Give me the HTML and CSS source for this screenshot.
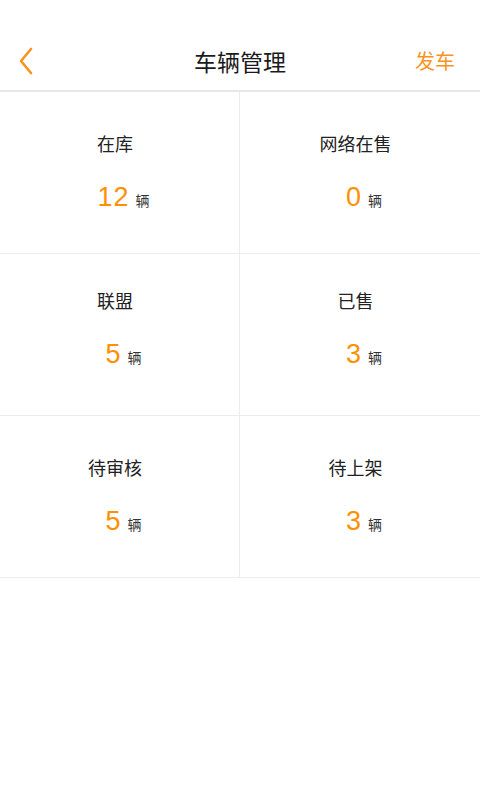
FILE: index.html
```html
<!DOCTYPE html>
<html lang="zh">
<head>
<meta charset="utf-8">
<link rel="stylesheet" href="styles.css">
</head>
<body>
<div class="app">
  <header class="nav">
    <div class="back">
      <svg width="16" height="28" viewBox="0 0 16 28"><path d="M13 2 L3 14 L13 26" fill="none" stroke="#f7931e" stroke-width="2.6" stroke-linecap="round" stroke-linejoin="round"/></svg>
    </div>
    <div class="title">车辆管理</div>
    <div class="action">发车</div>
  </header>
  <div class="grid">
    <div class="cell"><div class="label">在库</div><div class="count"><span class="num">12</span><span class="unit">辆</span></div></div>
    <div class="cell"><div class="label">网络在售</div><div class="count"><span class="num">0</span><span class="unit">辆</span></div></div>
    <div class="cell cell-mid"><div class="label">联盟</div><div class="count"><span class="num">5</span><span class="unit">辆</span></div></div>
    <div class="cell cell-mid"><div class="label">已售</div><div class="count"><span class="num">3</span><span class="unit">辆</span></div></div>
    <div class="cell"><div class="label">待审核</div><div class="count"><span class="num">5</span><span class="unit">辆</span></div></div>
    <div class="cell"><div class="label">待上架</div><div class="count"><span class="num">3</span><span class="unit">辆</span></div></div>
  </div>
</div>
</body>
</html>
```
FILE: styles.css
```css
* { box-sizing: border-box; margin: 0; padding: 0; }
html, body { background: #fff; }
body { font-family: "Noto Sans CJK SC", "Noto Sans", sans-serif; color: #222; }
.app { width: 480px; height: 800px; background: #fff; }
.nav {
  height: 92px;
  padding-top: 31px;
  display: grid;
  grid-template-columns: 80px 1fr 80px;
  align-items: center;
  border-bottom: 2px solid #e6e6e6;
}
.nav > * { height: 59px; display: flex; align-items: center; }
.back { padding-left: 18px; }
.back svg { display: block; }
.title { justify-content: center; font-size: 23px; color: #1a1a1a; }
.action { justify-content: flex-end; padding-right: 25px; font-size: 20px; color: #f7931e; }
.grid { display: grid; grid-template-columns: 240px 240px; }
.cell {
  height: 162px;
  border-bottom: 1px solid #ececec;
  display: flex;
  flex-direction: column;
  align-items: center;
  padding-top: 39px;
}
.cell-mid { padding-top: 34px; }
.cell:nth-child(odd) { border-right: 1px solid #ececec; }
.label { font-size: 18px; line-height: 24px; padding-right: 9px; color: #222; }
.count { margin-top: 27px; height: 30px; display: flex; align-items: center; padding-left: 8px; }
.num { font-family: "Liberation Sans", Arial, sans-serif; font-size: 27px; line-height: 30px; color: #ff9000; letter-spacing: 1px; }
.unit { font-size: 14px; line-height: 16px; color: #333; margin-left: 6px; margin-top: 5px; }
```
